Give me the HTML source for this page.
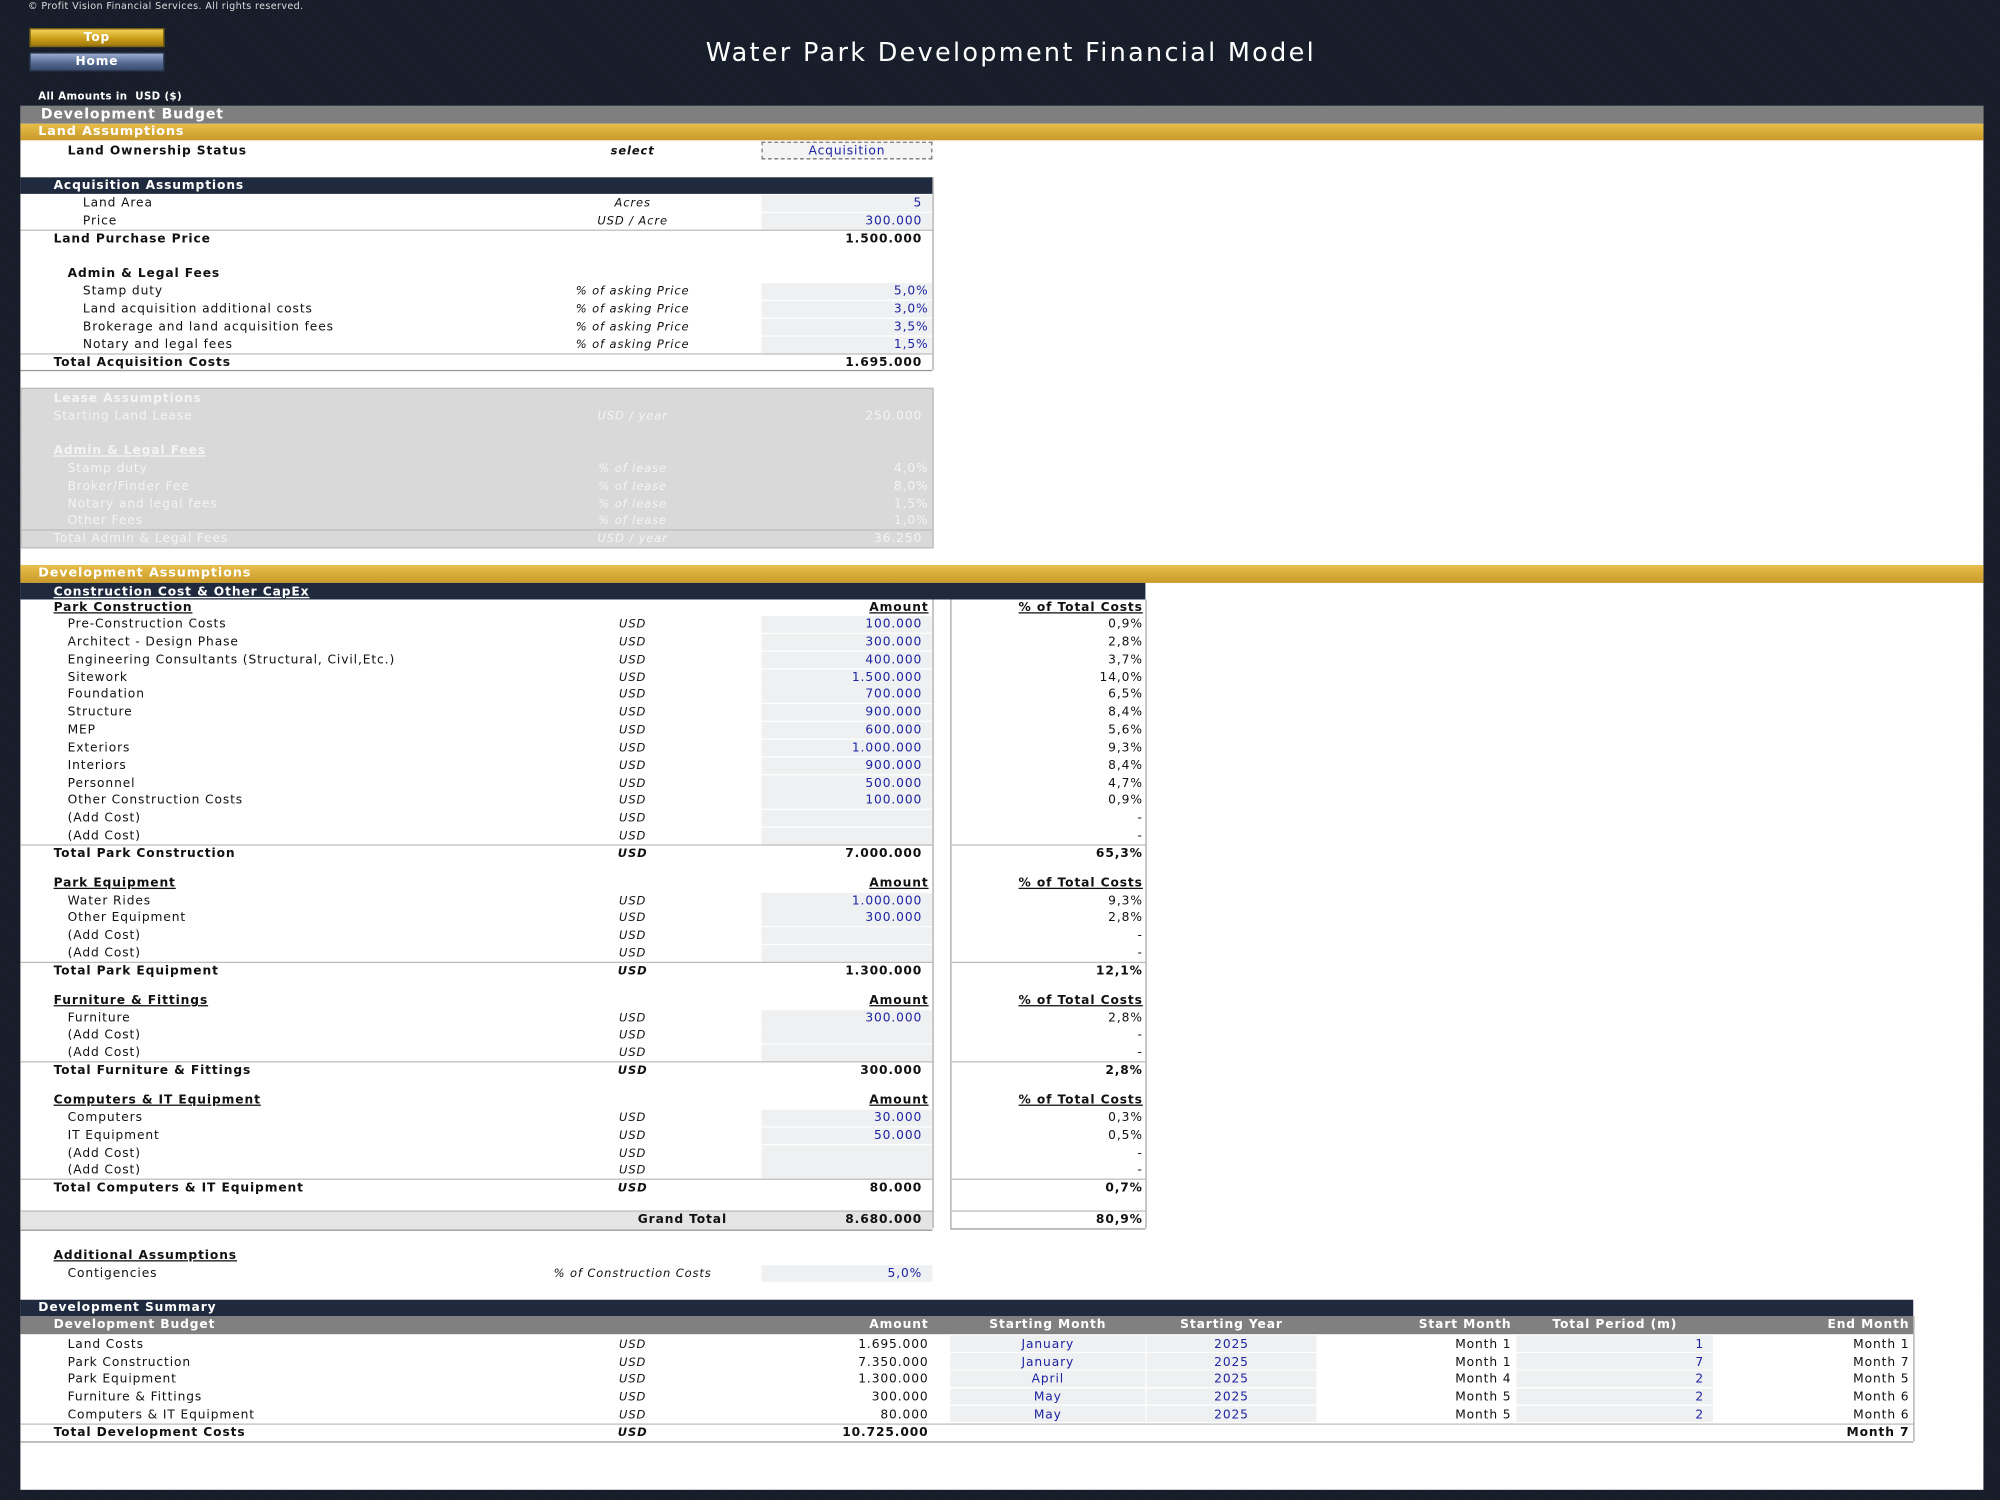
<!DOCTYPE html>
<html><head><meta charset="utf-8">
<style>
html,body{margin:0;padding:0;width:2000px;height:1500px;overflow:hidden;background:#161b26;}
#w{position:absolute;left:0;top:0;width:1568px;height:1176px;transform:scale(1.27551);transform-origin:0 0;font-family:"DejaVu Sans","Liberation Sans",sans-serif;font-size:9.6px;letter-spacing:0.7px;color:#111;
background:repeating-linear-gradient(45deg,#1b2130 0 1px,#151a25 1px 2px);}
.a{position:absolute;}
.white{background:#fff;}
.row{position:absolute;left:0;width:1568px;height:14px;line-height:14px;}
.row span{position:absolute;white-space:nowrap;}
.l1{left:42px}.l2{left:53px}.l3{left:65px}
.u{left:420px;width:152px;text-align:center;font-style:italic;font-size:9px}
.v{left:597px;width:126px;text-align:right}
.p{left:745px;width:151px;text-align:right}
.b{font-weight:bold}
.bl{color:#1e24a0}
.box{position:absolute;left:597px;width:134px;height:13px;background:#eef0f2;border-bottom:1px solid #fff}
.hl{position:absolute;height:1px;background:#bdbdbd}
.vl{position:absolute;width:1px;background:#a8a8a8}
.ul{text-decoration:underline}
.lease span{color:#f4f4f4}
</style></head><body><div id="w">
<div class="a" style="left:22px;top:0;font-size:7.5px;color:#ddd;letter-spacing:0.3px">© Profit Vision Financial Services. All rights reserved.</div>
<div class="a" style="left:23px;top:22px;width:104px;height:13px;background:linear-gradient(#f3d35a,#c79a16 60%,#9e7a10);border:1px solid #7a6212;color:#fff;font-weight:bold;text-align:center;line-height:13px;font-size:9.5px">Top</div>
<div class="a" style="left:23px;top:41px;width:104px;height:13px;background:linear-gradient(#9aaed0,#52678f 60%,#3b4c6e);border:1px solid #2c3a55;color:#fff;font-weight:bold;text-align:center;line-height:13px;font-size:9.5px">Home</div>
<div class="a" style="left:430px;top:29px;width:725px;text-align:center;color:#fff;font-size:20px;letter-spacing:1.8px">Water Park Development Financial Model</div>
<div class="a" style="left:30px;top:71px;color:#fff;font-weight:bold;font-size:8px;letter-spacing:0.3px">All Amounts in&nbsp; USD ($)</div>

<div class="a white" style="left:16px;top:83px;width:1539px;height:1085px"></div>
<div class="a" style="left:16px;top:83px;width:1539px;height:14px;background:#7f7f7f;color:#fff;font-weight:bold;font-size:11px;line-height:14px;padding-left:16px;box-sizing:border-box">Development Budget</div>
<div class="a" style="left:16px;top:97px;width:1539px;height:13px;background:linear-gradient(#e8be4a,#c99a2a);color:#fff;font-weight:bold;font-size:10px;line-height:13px;padding-left:14px;box-sizing:border-box">Land Assumptions</div>

<div class="row" style="top:112px"><span class="l2 b">Land Ownership Status</span><span class="u b">select</span></div>
<div class="a" style="left:597px;top:111px;width:132px;height:12px;border:1px dashed #777;background:#f4f4f4;color:#1e24a0;text-align:center;line-height:13px">Acquisition</div>

<div class="a" style="left:16px;top:139px;width:715px;height:13px;background:#1f2a3e;color:#fff;font-weight:bold;line-height:14px;padding-left:26px;box-sizing:border-box">Acquisition Assumptions</div>
<div class="vl" style="left:731px;top:139px;height:151px"></div>
<div class="box" style="top:153px"></div><div class="box" style="top:167px"></div>
<div class="row" style="top:153px"><span class="l3">Land Area</span><span class="u">Acres</span><span class="v bl">5</span></div>
<div class="row" style="top:167px"><span class="l3">Price</span><span class="u">USD / Acre</span><span class="v bl">300.000</span></div>
<div class="hl" style="left:16px;top:180px;width:715px"></div>
<div class="row" style="top:181px"><span class="l1 b">Land Purchase Price</span><span class="v b">1.500.000</span></div>
<div class="row" style="top:208px"><span class="l2 b">Admin &amp; Legal Fees</span></div>
<div class="box" style="top:222px"></div><div class="box" style="top:236px"></div><div class="box" style="top:250px"></div><div class="box" style="top:264px"></div>
<div class="row" style="top:222px"><span class="l3">Stamp duty</span><span class="u">% of asking Price</span><span class="v bl" style="width:131px">5,0%</span></div>
<div class="row" style="top:236px"><span class="l3">Land acquisition additional costs</span><span class="u">% of asking Price</span><span class="v bl" style="width:131px">3,0%</span></div>
<div class="row" style="top:250px"><span class="l3">Brokerage and land acquisition fees</span><span class="u">% of asking Price</span><span class="v bl" style="width:131px">3,5%</span></div>
<div class="row" style="top:264px"><span class="l3">Notary and legal fees</span><span class="u">% of asking Price</span><span class="v bl" style="width:131px">1,5%</span></div>
<div class="hl" style="left:16px;top:277px;width:715px"></div>
<div class="row" style="top:278px"><span class="l1 b">Total Acquisition Costs</span><span class="v b">1.695.000</span></div>
<div class="hl" style="left:16px;top:290px;width:715px;background:#999"></div>

<div class="a" style="left:16px;top:304px;width:714px;height:124px;background:#d9d9d9;border:1px solid #bbb"></div>
<div class="lease">
<div class="row" style="top:306px"><span class="l1 b">Lease Assumptions</span></div>
<div class="row" style="top:320px"><span class="l1">Starting Land Lease</span><span class="u">USD / year</span><span class="v">250.000</span></div>
<div class="row" style="top:347px"><span class="l1 b ul">Admin &amp; Legal Fees</span></div>
<div class="row" style="top:361px"><span class="l2">Stamp duty</span><span class="u">% of lease</span><span class="v" style="width:131px">4,0%</span></div>
<div class="row" style="top:375px"><span class="l2">Broker/Finder Fee</span><span class="u">% of lease</span><span class="v" style="width:131px">8,0%</span></div>
<div class="row" style="top:389px"><span class="l2">Notary and legal fees</span><span class="u">% of lease</span><span class="v" style="width:131px">1,5%</span></div>
<div class="row" style="top:402px"><span class="l2">Other Fees</span><span class="u">% of lease</span><span class="v" style="width:131px">1,0%</span></div>
<div class="hl" style="left:16px;top:415px;width:715px"></div>
<div class="row" style="top:416px"><span class="l1">Total Admin &amp; Legal Fees</span><span class="u">USD / year</span><span class="v">36.250</span></div>
</div>

<div class="a" style="left:16px;top:443px;width:1539px;height:14px;background:linear-gradient(#e8be4a,#c99a2a);color:#fff;font-weight:bold;font-size:10px;line-height:14px;padding-left:14px;box-sizing:border-box">Development Assumptions</div>
<div class="a" style="left:16px;top:457px;width:882px;height:13px;background:#1f2a3e;color:#fff;font-weight:bold;line-height:15px;padding-left:26px;box-sizing:border-box;text-decoration:underline">Construction Cost &amp; Other CapEx</div>
<div class="vl" style="left:731px;top:470px;height:493px"></div>
<div class="vl" style="left:745px;top:470px;height:493px"></div>
<div class="vl" style="left:898px;top:470px;height:493px"></div>

<div class="row" style="top:470px"><span class="l1 b ul">Park Construction</span><span class="v b ul" style="width:131px">Amount</span><span class="p b ul">% of Total Costs</span></div>
<div class="box" style="top:483px"></div><div class="box" style="top:497px"></div><div class="box" style="top:511px"></div><div class="box" style="top:525px"></div><div class="box" style="top:538px"></div><div class="box" style="top:552px"></div><div class="box" style="top:566px"></div><div class="box" style="top:580px"></div><div class="box" style="top:594px"></div><div class="box" style="top:608px"></div><div class="box" style="top:621px"></div><div class="box" style="top:635px"></div><div class="box" style="top:649px"></div>
<div class="row" style="top:483px"><span class="l2">Pre-Construction Costs</span><span class="u">USD</span><span class="v bl">100.000</span><span class="p">0,9%</span></div>
<div class="row" style="top:497px"><span class="l2">Architect - Design Phase</span><span class="u">USD</span><span class="v bl">300.000</span><span class="p">2,8%</span></div>
<div class="row" style="top:511px"><span class="l2">Engineering Consultants (Structural, Civil,Etc.)</span><span class="u">USD</span><span class="v bl">400.000</span><span class="p">3,7%</span></div>
<div class="row" style="top:525px"><span class="l2">Sitework</span><span class="u">USD</span><span class="v bl">1.500.000</span><span class="p">14,0%</span></div>
<div class="row" style="top:538px"><span class="l2">Foundation</span><span class="u">USD</span><span class="v bl">700.000</span><span class="p">6,5%</span></div>
<div class="row" style="top:552px"><span class="l2">Structure</span><span class="u">USD</span><span class="v bl">900.000</span><span class="p">8,4%</span></div>
<div class="row" style="top:566px"><span class="l2">MEP</span><span class="u">USD</span><span class="v bl">600.000</span><span class="p">5,6%</span></div>
<div class="row" style="top:580px"><span class="l2">Exteriors</span><span class="u">USD</span><span class="v bl">1.000.000</span><span class="p">9,3%</span></div>
<div class="row" style="top:594px"><span class="l2">Interiors</span><span class="u">USD</span><span class="v bl">900.000</span><span class="p">8,4%</span></div>
<div class="row" style="top:608px"><span class="l2">Personnel</span><span class="u">USD</span><span class="v bl">500.000</span><span class="p">4,7%</span></div>
<div class="row" style="top:621px"><span class="l2">Other Construction Costs</span><span class="u">USD</span><span class="v bl">100.000</span><span class="p">0,9%</span></div>
<div class="row" style="top:635px"><span class="l2">(Add Cost)</span><span class="u">USD</span><span class="p">-</span></div>
<div class="row" style="top:649px"><span class="l2">(Add Cost)</span><span class="u">USD</span><span class="p">-</span></div>
<div class="hl" style="left:16px;top:662px;width:715px"></div><div class="hl" style="left:745px;top:662px;width:153px"></div>
<div class="row" style="top:663px"><span class="l1 b">Total Park Construction</span><span class="u b">USD</span><span class="v b">7.000.000</span><span class="p b">65,3%</span></div>

<div class="row" style="top:686px"><span class="l1 b ul">Park Equipment</span><span class="v b ul" style="width:131px">Amount</span><span class="p b ul">% of Total Costs</span></div>
<div class="box" style="top:700px"></div><div class="box" style="top:713px"></div><div class="box" style="top:727px"></div><div class="box" style="top:741px"></div>
<div class="row" style="top:700px"><span class="l2">Water Rides</span><span class="u">USD</span><span class="v bl">1.000.000</span><span class="p">9,3%</span></div>
<div class="row" style="top:713px"><span class="l2">Other Equipment</span><span class="u">USD</span><span class="v bl">300.000</span><span class="p">2,8%</span></div>
<div class="row" style="top:727px"><span class="l2">(Add Cost)</span><span class="u">USD</span><span class="p">-</span></div>
<div class="row" style="top:741px"><span class="l2">(Add Cost)</span><span class="u">USD</span><span class="p">-</span></div>
<div class="hl" style="left:16px;top:754px;width:715px"></div><div class="hl" style="left:745px;top:754px;width:153px"></div>
<div class="row" style="top:755px"><span class="l1 b">Total Park Equipment</span><span class="u b">USD</span><span class="v b">1.300.000</span><span class="p b">12,1%</span></div>

<div class="row" style="top:778px"><span class="l1 b ul">Furniture &amp; Fittings</span><span class="v b ul" style="width:131px">Amount</span><span class="p b ul">% of Total Costs</span></div>
<div class="box" style="top:792px"></div><div class="box" style="top:805px"></div><div class="box" style="top:819px"></div>
<div class="row" style="top:792px"><span class="l2">Furniture</span><span class="u">USD</span><span class="v bl">300.000</span><span class="p">2,8%</span></div>
<div class="row" style="top:805px"><span class="l2">(Add Cost)</span><span class="u">USD</span><span class="p">-</span></div>
<div class="row" style="top:819px"><span class="l2">(Add Cost)</span><span class="u">USD</span><span class="p">-</span></div>
<div class="hl" style="left:16px;top:832px;width:715px"></div><div class="hl" style="left:745px;top:832px;width:153px"></div>
<div class="row" style="top:833px"><span class="l1 b">Total Furniture &amp; Fittings</span><span class="u b">USD</span><span class="v b">300.000</span><span class="p b">2,8%</span></div>

<div class="row" style="top:856px"><span class="l1 b ul">Computers &amp; IT Equipment</span><span class="v b ul" style="width:131px">Amount</span><span class="p b ul">% of Total Costs</span></div>
<div class="box" style="top:870px"></div><div class="box" style="top:884px"></div><div class="box" style="top:898px"></div><div class="box" style="top:911px"></div>
<div class="row" style="top:870px"><span class="l2">Computers</span><span class="u">USD</span><span class="v bl">30.000</span><span class="p">0,3%</span></div>
<div class="row" style="top:884px"><span class="l2">IT Equipment</span><span class="u">USD</span><span class="v bl">50.000</span><span class="p">0,5%</span></div>
<div class="row" style="top:898px"><span class="l2">(Add Cost)</span><span class="u">USD</span><span class="p">-</span></div>
<div class="row" style="top:911px"><span class="l2">(Add Cost)</span><span class="u">USD</span><span class="p">-</span></div>
<div class="hl" style="left:16px;top:924px;width:715px"></div><div class="hl" style="left:745px;top:924px;width:153px"></div>
<div class="row" style="top:925px"><span class="l1 b">Total Computers &amp; IT Equipment</span><span class="u b">USD</span><span class="v b">80.000</span><span class="p b">0,7%</span></div>

<div class="a" style="left:16px;top:949px;width:715px;height:14px;background:#e4e4e4;border-top:1px solid #bbb;border-bottom:1px solid #999"></div>
<div class="hl" style="left:745px;top:949px;width:153px"></div><div class="hl" style="left:745px;top:963px;width:153px;background:#999"></div>
<div class="row" style="top:950px"><span class="b" style="left:420px;width:150px;text-align:right">Grand Total</span><span class="v b">8.680.000</span><span class="p b">80,9%</span></div>

<div class="row" style="top:978px"><span class="l1 b ul">Additional Assumptions</span></div>
<div class="box" style="top:992px"></div>
<div class="row" style="top:992px"><span class="l2">Contigencies</span><span class="u" style="left:390px;width:212px">% of Construction Costs</span><span class="v bl">5,0%</span></div>

<div class="a" style="left:16px;top:1019px;width:1484px;height:13px;background:#1f2a3e;color:#fff;font-weight:bold;line-height:14px;padding-left:14px;box-sizing:border-box">Development Summary</div>
<div class="a" style="left:16px;top:1032px;width:1484px;height:14px;background:#808080"></div>
<div class="row" style="top:1032px;color:#fff;font-weight:bold"><span class="l1">Development Budget</span><span class="v" style="width:131px">Amount</span><span style="left:745px;width:153px;text-align:center">Starting Month</span><span style="left:899px;width:133px;text-align:center">Starting Year</span><span style="left:1032px;width:153px;text-align:right">Start Month</span><span style="left:1189px;width:154px;text-align:center">Total Period (m)</span><span style="left:1343px;width:154px;text-align:right">End Month</span></div>
<div class="a" style="left:745px;top:1047px;width:153px;height:69px;background:repeating-linear-gradient(#eef0f2 0 12.8px,#fff 12.8px 13.8px)"></div>
<div class="a" style="left:899px;top:1047px;width:133px;height:69px;background:repeating-linear-gradient(#eef0f2 0 12.8px,#fff 12.8px 13.8px)"></div>
<div class="a" style="left:1189px;top:1047px;width:154px;height:69px;background:repeating-linear-gradient(#eef0f2 0 12.8px,#fff 12.8px 13.8px)"></div>
<div class="row" style="top:1048px"><span class="l2">Land Costs</span><span class="u">USD</span><span class="v" style="width:131px">1.695.000</span><span class="bl" style="left:745px;width:153px;text-align:center">January</span><span class="bl" style="left:899px;width:133px;text-align:center">2025</span><span style="left:1032px;width:153px;text-align:right">Month 1</span><span class="bl" style="left:1189px;width:147px;text-align:right">1</span><span style="left:1343px;width:154px;text-align:right">Month 1</span></div>
<div class="row" style="top:1062px"><span class="l2">Park Construction</span><span class="u">USD</span><span class="v" style="width:131px">7.350.000</span><span class="bl" style="left:745px;width:153px;text-align:center">January</span><span class="bl" style="left:899px;width:133px;text-align:center">2025</span><span style="left:1032px;width:153px;text-align:right">Month 1</span><span class="bl" style="left:1189px;width:147px;text-align:right">7</span><span style="left:1343px;width:154px;text-align:right">Month 7</span></div>
<div class="row" style="top:1075px"><span class="l2">Park Equipment</span><span class="u">USD</span><span class="v" style="width:131px">1.300.000</span><span class="bl" style="left:745px;width:153px;text-align:center">April</span><span class="bl" style="left:899px;width:133px;text-align:center">2025</span><span style="left:1032px;width:153px;text-align:right">Month 4</span><span class="bl" style="left:1189px;width:147px;text-align:right">2</span><span style="left:1343px;width:154px;text-align:right">Month 5</span></div>
<div class="row" style="top:1089px"><span class="l2">Furniture &amp; Fittings</span><span class="u">USD</span><span class="v" style="width:131px">300.000</span><span class="bl" style="left:745px;width:153px;text-align:center">May</span><span class="bl" style="left:899px;width:133px;text-align:center">2025</span><span style="left:1032px;width:153px;text-align:right">Month 5</span><span class="bl" style="left:1189px;width:147px;text-align:right">2</span><span style="left:1343px;width:154px;text-align:right">Month 6</span></div>
<div class="row" style="top:1103px"><span class="l2">Computers &amp; IT Equipment</span><span class="u">USD</span><span class="v" style="width:131px">80.000</span><span class="bl" style="left:745px;width:153px;text-align:center">May</span><span class="bl" style="left:899px;width:133px;text-align:center">2025</span><span style="left:1032px;width:153px;text-align:right">Month 5</span><span class="bl" style="left:1189px;width:147px;text-align:right">2</span><span style="left:1343px;width:154px;text-align:right">Month 6</span></div>
<div class="hl" style="left:16px;top:1116px;width:1484px"></div>
<div class="row" style="top:1117px"><span class="l1 b">Total Development Costs</span><span class="u b">USD</span><span class="v b" style="width:131px">10.725.000</span><span class="b" style="left:1343px;width:154px;text-align:right">Month 7</span></div>
<div class="hl" style="left:16px;top:1130px;width:1484px;background:#999"></div>
<div class="vl" style="left:1500px;top:1032px;height:98px"></div>
</div></body></html>
